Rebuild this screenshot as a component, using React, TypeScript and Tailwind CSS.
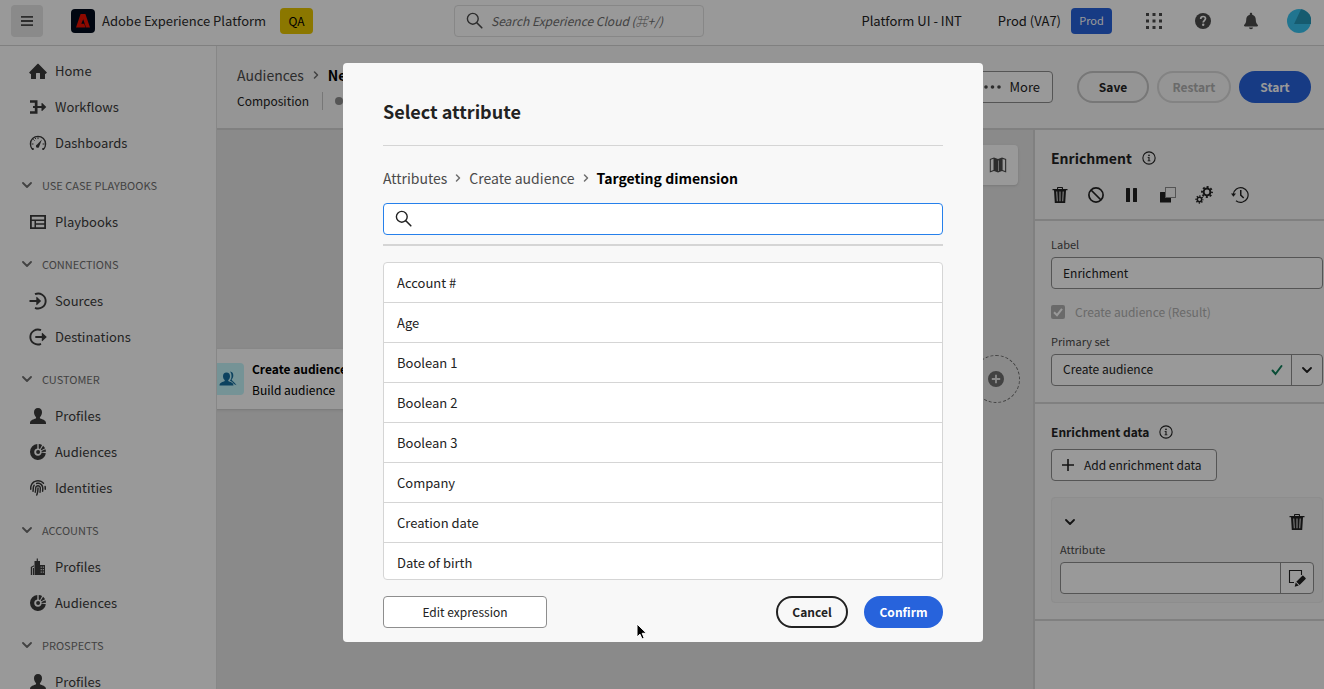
import type { ReactNode } from "react";
import { FaFingerprint } from "react-icons/fa6";

type IconProps = { className?: string; children?: ReactNode };

function Icon({ className = "size-[18px]", children }: IconProps) {
  return (
    <svg viewBox="0 0 18 18" className={`shrink-0 ${className}`} fill="currentColor" aria-hidden="true">
      {children}
    </svg>
  );
}

const HomeIcon = () => (
  <Icon>
    <path d="M17.666 10.125 9.375 1.834a.53.53 0 0 0-.75 0L.334 10.125a.53.53 0 0 0 0 .75l.979.9785A.5.5 0 0 0 1.6665 12H2v4.5a.5.5 0 0 0 .5.5h4a.5.5 0 0 0 .5-.5v-5a.5.5 0 0 1 .5-.5h3a.5.5 0 0 1 .5.5v5a.5.5 0 0 0 .5.5h4a.5.5 0 0 0 .5-.5V12h.3335a.5.5 0 0 0 .3535-.1465l.979-.9785a.53.53 0 0 0 0-.75Z" />
  </Icon>
);
const WorkflowIcon = () => (
  <Icon>
    <path d="M1 2.200h7.500V8h4V5.400a.4.4 0 0 1 .7-.3L17.300 9l-4.100 3.900a.4.4 0 0 1-.7-.3V10h-4v5.800H1v-2.500h4.800V10H4V8h1.800V4.700H1Z" />
  </Icon>
);
const DashboardIcon = () => (
  <Icon>
    <path d="M3.600 15.300A7.600 7.600 0 1 1 14.400 15.300" fill="none" stroke="currentColor" strokeWidth="1.300" />
    <path d="M12.900 5.400 10.300 12.200a1.700 1.700 0 1 1-2.200-1.700Z" />
    <path d="M2.500 10h2M4.300 5.300l1.300 1.300M9 3.200v1.900M15.600 10h-2M6.200 3.900l.6 1.200" fill="none" stroke="currentColor" strokeWidth="1" />
    <path d="M2.300 14h2.400v2H3.200ZM15.700 14h-2.400v2h1.500Z" />
  </Icon>
);
const PlaybookIcon = () => (
  <Icon>
    <path d="M1 2h16v14H1ZM2.800 3.800v2.700h12.400V3.800ZM2.800 8v6.300h2.700V8ZM7 8v2.300h8.200V8ZM7 11.800v2.500h8.200v-2.500Z" fillRule="evenodd" />
  </Icon>
);
const SourceIcon = () => (
  <Icon>
    <path d="M6 2.200A7.500 7.500 0 1 1 6 15.800" fill="none" stroke="currentColor" strokeWidth="1.900" />
    <path d="M.5 8h6.800V5.300a.4.4 0 0 1 .7-.3l4.100 4-4.100 4a.4.4 0 0 1-.7-.3V10H.5Z" />
  </Icon>
);
const DestinationIcon = () => (
  <Icon>
    <path d="M12 2.200A7.500 7.500 0 1 0 12 15.800" fill="none" stroke="currentColor" strokeWidth="1.900" />
    <path d="M6.300 8h6.500V5.300a.4.4 0 0 1 .7-.3l4.300 4-4.300 4a.4.4 0 0 1-.7-.3V10H6.300Z" />
  </Icon>
);
const PersonIcon = () => (
  <Icon>
    <path d="M9 1c2.600 0 4 1.900 4 4.300 0 1.800-.7 3.600-1.900 4.600-.3.300-.3 1.200.2 1.500 1.500.8 5.700 1.300 5.700 4.600v1H1v-1c0-3.300 4.200-3.800 5.700-4.600.5-.3.500-1.200.2-1.500C5.700 8.900 5 7.100 5 5.300 5 2.900 6.400 1 9 1Z" />
  </Icon>
);
const SegmentIcon = () => (
  <Icon>
    <path d="M8.300 1A8 8 0 1 0 16.900 10.200L12.600 9.600A3.700 3.700 0 1 1 8.300 5.400Z" />
    <path d="M9.700 1a8 8 0 0 1 3.400 1.100L11 6a4 4 0 0 0-1.300-.6ZM14.100 2.800a8 8 0 0 1 2 2.500L12.300 7.300l-.6-.8ZM16.500 6.300a8 8 0 0 1 .5 2.500l-4.300.1-.2-.8Z" />
    <circle cx="9.100" cy="9.100" r="2" />
  </Icon>
);
const BuildingIcon = () => (
  <Icon>
    <path d="M5.500 3h2.200V.5h1.200V3H11v4h5v10H5.500Z" />
    <path d="M11.700 8.500h1v1.200h-1ZM13.800 8.500h1v1.200h-1ZM11.700 11h1v1.200h-1ZM13.800 11h1v1.200h-1ZM11.700 13.500h1v1.200h-1ZM13.800 13.500h1v1.200h-1Z" fill="#fff" />
    <path d="M1.800 9 5 7.200v1.200L3 9.600V17H1.800ZM3.800 10H5v7H3.800Z" />
  </Icon>
);
const ChevronDown = () => (
  <svg viewBox="0 0 10 10" className="size-[10px] shrink-0" fill="none" stroke="currentColor" strokeWidth="1.800" strokeLinecap="round" strokeLinejoin="round" aria-hidden="true">
    <path d="M1 3 5 7 9 3" />
  </svg>
);
const ChevronRight = () => (
  <svg viewBox="0 0 10 10" className="size-[10px] shrink-0 text-[#6e6e6e]" fill="none" stroke="currentColor" strokeWidth="1.500" strokeLinecap="round" strokeLinejoin="round" aria-hidden="true">
    <path d="M3.500 2 6.500 5 3.500 8" />
  </svg>
);
const SearchIcon = () => (
  <Icon>
    <circle cx="6.800" cy="6.800" r="5.400" fill="none" stroke="currentColor" strokeWidth="1.400" />
    <path d="m10.800 10.800 5 5" fill="none" stroke="currentColor" strokeWidth="1.600" strokeLinecap="round" />
  </Icon>
);
const TrashIcon = () => (
  <Icon>
    <path d="M6 3V1.800C6 1.300 6.400 1 6.800 1h4.400c.5 0 .8.300.8.800V3h4.500v1.200H15L14.200 17H3.800L3 4.200H1.500V3Zm1.100 0h3.800v-.9H7.100ZM5.300 5.500l.5 9.700h.9l-.5-9.700Zm3.200 0v9.700h1V5.500Zm3.200 0-.4 9.700h.9l.5-9.700Z" fillRule="evenodd" />
  </Icon>
);
const BlockIcon = () => (
  <Icon>
    <circle cx="9" cy="9" r="7.100" fill="none" stroke="currentColor" strokeWidth="1.700" />
    <path d="m4 4 10 10" stroke="currentColor" strokeWidth="1.700" />
  </Icon>
);
const PauseIcon = () => (
  <Icon>
    <rect x="3" y="2" width="4" height="14" rx=".5" />
    <rect x="10" y="2" width="4" height="14" rx=".5" />
  </Icon>
);
const CopyIcon = () => (
  <Icon>
    <path d="M1.500 6H6v6h6v4.500H1.500a.5.500 0 0 1-.5-.5V6.500A.5.500 0 0 1 1.500 6Z" />
    <rect x="6.500" y="1.500" width="10" height="10" fill="none" stroke="currentColor" strokeDasharray="1 1" />
  </Icon>
);
const GearsIcon = () => (
  <Icon>
    <circle cx="12" cy="6" r="3.400" fill="none" stroke="currentColor" strokeWidth="2" />
    <circle cx="12" cy="6" r="5" fill="none" stroke="currentColor" strokeWidth="1.900" strokeDasharray="2 1.927" strokeDashoffset="1" />
    <circle cx="4.500" cy="13.500" r="2.200" fill="none" stroke="currentColor" strokeWidth="1.500" />
    <circle cx="4.500" cy="13.500" r="3.400" fill="none" stroke="currentColor" strokeWidth="1.500" strokeDasharray="1.300 1.370" strokeDashoffset=".65" />
  </Icon>
);
const HistoryIcon = () => (
  <Icon>
    <path d="M2.300 8.500A7.400 7.400 0 1 1 5 14.700" fill="none" stroke="currentColor" strokeWidth="1.200" />
    <path d="M0 7.500h5L2.400 10.700Z" />
    <path d="M9 4h1.500v4.800l2.700 2.600-1 1.100L9 9.400Z" />
  </Icon>
);
const InfoIcon = () => (
  <Icon className="size-[14px]">
    <circle cx="9" cy="9" r="7.900" fill="none" stroke="currentColor" strokeWidth="1.400" />
    <circle cx="9" cy="5.500" r="1.100" />
    <path d="M7.200 7.800h2.500v4.400h1.100v1H7.200v-1h1.100V8.800H7.200Z" />
  </Icon>
);
const MapIcon = () => (
  <Icon>
    <path d="M.8 3 5 1.500 9 3l4-1.500L17.200 3v13.500L13 15l-4 1.500L5 15 .8 16.500Zm1 .7v11.400l2.700-1V2.700ZM13.600 2.900v11.200l2.500.9V3.800ZM9 4.500v10.500h.6V4.500Z" fillRule="evenodd" />
  </Icon>
);
const AudienceIcon = () => (
  <Icon>
    <path d="M7.500 2.500c2.300 0 3.500 1.600 3.500 3.700 0 1.500-.6 3-1.600 3.900-.3.300-.2 1 .2 1.200 1.300.7 4.900 1.100 4.900 4.200H.5c0-3.100 3.600-3.500 4.900-4.200.4-.2.500-.9.200-1.200C4.600 9.200 4 7.700 4 6.200c0-2.100 1.200-3.700 3.500-3.700Z" />
    <path d="M11 1.500c2.500.3 3.300 2 3.300 4 0 1.600-.7 3-1.700 4 1 2.200 3.300 2.800 5 5.700L14.900 14c-.8-1.600-2.500-2.600-4-3.300 1-1.200 1.600-2.700 1.600-4.500 0-2-.5-3.500-1.500-4.700Z" />
  </Icon>
);
const EditIcon = () => (
  <Icon>
    <path d="M13.500 6V1.500h-12v12H6" fill="none" stroke="currentColor" strokeWidth="1.100" />
    <path d="m15.300 6.700 2.300 2.300c.3.300.3.700 0 1l-6 6-3.300-3.300 6-6c.3-.3.700-.3 1 0ZM7.700 13.500l3.100 3-4.100 1.300Z" />
  </Icon>
);

type NavEntry = { label: string; icon: () => ReactNode };
const nav: { title?: string; items: NavEntry[] }[] = [
  {
    items: [
      { label: "Home", icon: HomeIcon },
      { label: "Workflows", icon: WorkflowIcon },
      { label: "Dashboards", icon: DashboardIcon },
    ],
  },
  { title: "USE CASE PLAYBOOKS", items: [{ label: "Playbooks", icon: PlaybookIcon }] },
  {
    title: "CONNECTIONS",
    items: [
      { label: "Sources", icon: SourceIcon },
      { label: "Destinations", icon: DestinationIcon },
    ],
  },
  {
    title: "CUSTOMER",
    items: [
      { label: "Profiles", icon: PersonIcon },
      { label: "Audiences", icon: SegmentIcon },
      { label: "Identities", icon: () => <FaFingerprint className="size-[18px] shrink-0 p-px" /> },
    ],
  },
  {
    title: "ACCOUNTS",
    items: [
      { label: "Profiles", icon: BuildingIcon },
      { label: "Audiences", icon: SegmentIcon },
    ],
  },
  { title: "PROSPECTS", items: [{ label: "Profiles", icon: PersonIcon }] },
];

const attributes = ["Account #", "Age", "Boolean 1", "Boolean 2", "Boolean 3", "Company", "Creation date", "Date of birth"];

function TopBar() {
  return (
    <header className="flex h-[46px] shrink-0 items-center border-b border-[#d5d5d5] bg-white pb-1 pl-[11px] pr-[13px]">
      <button aria-label="Menu" className="flex size-8 shrink-0 items-center justify-center rounded bg-[#e6e6e6] text-[#4b4b4b]">
        <svg viewBox="0 0 12 10" className="h-[10px] w-3" fill="currentColor" aria-hidden="true">
          <path d="M0 0h12v1.800H0ZM0 4.100h12v1.800H0ZM0 8.200h12V10H0Z" />
        </svg>
      </button>
      <div className="ml-7 flex w-[209px] shrink-0 items-center gap-[7px]">
        <svg viewBox="0 0 24 24" className="size-6 shrink-0" aria-hidden="true">
          <rect width="24" height="24" rx="4" fill="#000b1d" />
          <path d="M9.600 5h4.800L19 18.500h-4L12.200 10.200 10.300 14.700h2.900l1.300 3.800H5Z" fill="#eb1000" />
        </svg>
        <span className="whitespace-nowrap text-[13px] text-[#2c2c2c]">Adobe Experience Platform</span>
      </div>
      <span className="flex h-[26px] w-[33px] shrink-0 items-center justify-center rounded bg-[#e8c600] text-xs text-black">QA</span>
      <label className="ml-[141px] flex h-8 w-[250px] items-center gap-[7px] rounded border border-[#e1e1e1] px-[11px] text-[#4b4b4b]">
        <SearchIcon />
        <input
          aria-label="Search Experience Cloud"
          placeholder="Search Experience Cloud (⌘+/)"
          className="w-full min-w-0 bg-transparent text-xs italic outline-none placeholder:text-[#6e6e6e]"
        />
      </label>
      <div className="ml-auto flex items-center whitespace-nowrap text-[13px] text-[#222]">
        <span>Platform UI - INT</span>
        <span className="ml-9">Prod (VA7)</span>
        <span className="ml-[10px] flex h-[26px] w-[41px] items-center justify-center rounded bg-[#2763dc] text-[11px] text-white">Prod</span>
        <button aria-label="Apps" className="ml-[34px] text-[#4b4b4b]">
          <svg viewBox="0 0 16 16" className="size-4" fill="currentColor" aria-hidden="true">
            <path d="M0 0h3v3H0ZM6.500 0h3v3h-3ZM13 0h3v3h-3ZM0 6.500h3v3H0ZM6.500 6.500h3v3h-3ZM13 6.500h3v3h-3ZM0 13h3v3H0ZM6.500 13h3v3h-3ZM13 13h3v3h-3Z" />
          </svg>
        </button>
        <button aria-label="Help" className="ml-8 text-[#4b4b4b]">
          <Icon>
            <circle cx="9" cy="9" r="8" />
            <path d="M6.700 6.900C6.700 5.300 7.700 4.500 9.100 4.500s2.400.8 2.400 2.100c0 1.900-2.300 2-2.300 3.900" fill="none" stroke="#fff" strokeWidth="1.700" />
            <circle cx="9.200" cy="12.800" r="1.200" fill="#fff" />
          </Icon>
        </button>
        <button aria-label="Notifications" className="ml-[30px] text-[#4b4b4b]">
          <Icon>
            <path d="M9 .8c.7 0 1.200.5 1.200 1.200v.8C12.600 3.400 13.800 5.300 13.800 8c0 3.700 2.200 4.600 2.200 5.600 0 .6-.5.900-1 .9H3c-.5 0-1-.3-1-.9C2 12.600 4.200 11.700 4.200 8c0-2.700 1.200-4.600 3.600-5.200V2C7.800 1.300 8.300.8 9 .8ZM6.900 15.500h4.200A2.100 2.100 0 0 1 9 17.300a2.100 2.100 0 0 1-2.100-1.800Z" />
          </Icon>
        </button>
        <button aria-label="Account" className="ml-[27px]">
          <svg viewBox="0 0 24 24" className="size-6" aria-hidden="true">
            <circle cx="12" cy="12" r="12" fill="#38c4f0" />
            <path d="M14 .2A12 12 0 0 1 24 15H7Z" fill="#2698ba" />
          </svg>
        </button>
      </div>
    </header>
  );
}

function SideNav() {
  return (
    <nav className="w-[217px] shrink-0 overflow-hidden border-r border-[#e1e1e1] bg-white">
      {nav.map((group, i) => (
        <section key={i} className="mt-[7px]">
          {group.title && (
            <button className="flex h-9 items-center gap-[10px] pb-0.5 pl-[22px] text-[11px] text-[#6e6e6e]">
              <ChevronDown />
              {group.title}
            </button>
          )}
          {group.items.map(({ label, icon: ItemIcon }) => (
            <a key={label} href="#" className="flex h-9 items-center gap-2 pl-[29px] text-[13px] text-[#3b3b3b]">
              <ItemIcon />
              {label}
            </a>
          ))}
        </section>
      ))}
    </nav>
  );
}

function PageHeader() {
  return (
    <div className="flex h-[84px] shrink-0 items-center justify-between border-b-2 border-[#d5d5d5] bg-[#f8f8f8] pl-5 pr-[13px]">
      <div className="whitespace-nowrap">
        <div className="flex h-7 items-center gap-[7px] text-sm text-[#4b4b4b]">
          <a href="#">Audiences</a>
          <ChevronRight />
          <strong className="text-black">New composition</strong>
        </div>
        <div className="flex h-6 items-center text-xs text-[#222]">
          Composition
          <span className="ml-[13px] h-[18px] w-px bg-[#c6c6c6]" />
          <span className="ml-3 mr-2 size-2 rounded-full bg-[#8e8e8e]" />
          Draft
        </div>
      </div>
      <div className="flex items-center text-xs">
        <button className="flex h-8 w-[85px] items-center justify-end gap-2 rounded border border-[#8e8e8e] bg-white pr-3 text-[13px] text-[#222]">
          <svg viewBox="0 0 17 4" className="h-1 w-[17px]" fill="#4b4b4b" aria-hidden="true">
            <circle cx="2" cy="2" r="1.800" />
            <circle cx="8.500" cy="2" r="1.800" />
            <circle cx="15" cy="2" r="1.800" />
          </svg>
          More
        </button>
        <button className="ml-6 h-8 w-[72px] rounded-full border-2 border-[#c6c6c6] font-bold text-[#222]">Save</button>
        <button disabled className="ml-2 h-8 w-[74px] rounded-full border-2 border-[#dadada] font-bold text-[#b1b1b1]">Restart</button>
        <button className="ml-2 h-8 w-[72px] rounded-full bg-[#2763dc] font-bold text-white">Start</button>
      </div>
    </div>
  );
}

function Canvas() {
  return (
    <div className="relative min-w-0 flex-1 overflow-hidden bg-[#e6e6e6]">
      <div className="absolute left-[-15px] top-[219px] flex h-[60px] w-60 items-center gap-2 bg-white px-[10px] shadow">
        <span className="flex size-8 items-center justify-center rounded bg-[#c4f5fb] text-[#156f9f]">
          <AudienceIcon />
        </span>
        <div className="text-xs leading-[21px] text-black">
          <div className="font-bold">Create audience</div>
          <div>Build audience</div>
        </div>
      </div>
      <button aria-label="Add activity" className="absolute right-[13px] top-[225px] flex size-12 items-center justify-center rounded-full border border-dashed border-[#6e6e6e] text-[#6e6e6e]">
        <Icon>
          <path d="M9 1a8 8 0 1 0 0 16A8 8 0 0 0 9 1Zm-.9 3.800h1.800v3.300h3.300v1.800H9.900v3.300H8.100V9.900H4.800V8.100h3.300Z" fillRule="evenodd" />
        </Icon>
      </button>
      <button aria-label="Show map" className="absolute right-[15px] top-[15px] flex size-10 items-center justify-center rounded bg-white text-[#4b4b4b] shadow">
        <MapIcon />
      </button>
    </div>
  );
}

function PropertiesPanel() {
  const tools: [string, () => ReactNode][] = [
    ["Delete", TrashIcon],
    ["Disable", BlockIcon],
    ["Pause", PauseIcon],
    ["Copy", CopyIcon],
    ["Options", GearsIcon],
    ["History", HistoryIcon],
  ];
  return (
    <aside className="w-[291px] shrink-0 overflow-hidden border-l-2 border-[#d5d5d5] bg-[#f8f8f8] text-xs text-[#222]">
      <div className="h-[91px] border-b-2 border-[#d5d5d5] pl-4 pt-4">
        <h2 className="flex h-6 items-center gap-[10px] text-sm font-bold">
          Enrichment
          <InfoIcon />
        </h2>
        <div className="mt-4 flex gap-[18px]">
          {tools.map(([name, ToolIcon]) => (
            <button key={name} aria-label={name}>
              <ToolIcon />
            </button>
          ))}
        </div>
      </div>
      <div className="border-b-2 border-[#d5d5d5] pb-4 pl-4 pr-px pt-4">
        <label htmlFor="activity-label" className="block h-5 text-[11px] leading-[14px] text-[#4b4b4b]">Label</label>
        <input id="activity-label" defaultValue="Enrichment" className="h-8 w-full rounded border border-[#8e8e8e] bg-white px-[11px] pb-0.5 outline-none" />
        <label className="mt-[13px] flex h-5 items-center gap-[10px] text-[#b1b1b1]">
          <span className="relative flex">
            <input type="checkbox" defaultChecked disabled className="size-[14px] appearance-none rounded-[2px] bg-[#b1b1b1]" />
            <svg viewBox="0 0 14 14" className="pointer-events-none absolute inset-0 size-[14px]" fill="none" stroke="#fff" strokeWidth="2" aria-hidden="true">
              <path d="m3 7.200 3 3L11 3.800" />
            </svg>
          </span>
          Create audience (Result)
        </label>
        <label htmlFor="primary-set" className="mt-3 block h-5 text-[11px] leading-[14px] text-[#4b4b4b]">Primary set</label>
        <div className="flex h-8 items-center rounded border border-[#8e8e8e] bg-white">
          <input id="primary-set" defaultValue="Create audience" className="min-w-0 flex-1 bg-transparent pb-0.5 pl-[11px] outline-none" />
          <svg viewBox="0 0 12 12" className="mr-2 size-3" fill="none" stroke="#12805c" strokeWidth="2" strokeLinecap="round" aria-hidden="true">
            <path d="m1.500 6.500 3 3.500 6-8" />
          </svg>
          <button aria-label="Show sets" className="flex h-full w-[31px] items-center justify-center border-l border-[#8e8e8e]">
            <ChevronDown />
          </button>
        </div>
      </div>
      <div className="border-b-2 border-[#d5d5d5] pb-4 pl-4 pr-px pt-[18px]">
        <h3 className="flex h-5 items-center gap-[10px] font-bold">
          Enrichment data
          <InfoIcon />
        </h3>
        <button className="mt-[7px] flex h-8 w-[166px] items-center gap-[10px] whitespace-nowrap rounded border border-[#8e8e8e] bg-white pl-[10px]">
          <svg viewBox="0 0 12 12" className="size-3" stroke="currentColor" strokeWidth="1.600" aria-hidden="true">
            <path d="M6 0v12M0 6h12" />
          </svg>
          Add enrichment data
        </button>
        <div className="mt-4 h-[106px] rounded border border-[#ebebeb] bg-[#f3f3f3] px-2 pt-[15px]">
          <div className="flex h-[18px] items-center justify-between px-[5px] pr-2">
            <button aria-label="Collapse">
              <ChevronDown />
            </button>
            <button aria-label="Remove attribute">
              <TrashIcon />
            </button>
          </div>
          <label htmlFor="attribute" className="mt-[11px] block h-5 text-[11px] leading-[14px] text-[#4b4b4b]">Attribute</label>
          <div className="flex h-8 items-center rounded border border-[#8e8e8e] bg-white">
            <input id="attribute" className="min-w-0 flex-1 bg-transparent pl-[11px] outline-none" />
            <button aria-label="Edit attribute" className="flex h-full w-[33px] items-center justify-center border-l border-[#8e8e8e]">
              <EditIcon />
            </button>
          </div>
        </div>
      </div>
    </aside>
  );
}

function AttributeDialog() {
  return (
    <div className="fixed inset-0 flex items-center justify-center bg-black/40 pl-0.5 pt-4">
      <div role="dialog" aria-labelledby="dialog-title" className="w-[640px] max-w-full rounded bg-[#f8f8f8] px-10 pb-[14px] pt-[33px] text-[13px] text-[#222]">
        <h1 id="dialog-title" className="text-lg font-bold leading-[30px]">Select attribute</h1>
        <hr className="mt-[19px] border-[#d5d5d5]" />
        <div className="mt-5 flex h-6 items-center gap-[6px] text-sm text-[#4b4b4b]">
          <a href="#">Attributes</a>
          <ChevronRight />
          <a href="#">Create audience</a>
          <ChevronRight />
          <strong className="text-black">Targeting dimension</strong>
        </div>
        <label className="mt-[13px] flex h-8 items-center gap-2 rounded border border-[#2680eb] bg-white px-[11px]">
          <SearchIcon />
          <input aria-label="Search attributes" className="min-w-0 flex-1 bg-transparent outline-none" />
        </label>
        <hr className="mt-[9px] border-t-2 border-[#d5d5d5]" />
        <ul className="mt-4 h-[318px] overflow-hidden rounded border border-[#d5d5d5] bg-white">
          {attributes.map((name) => (
            <li key={name} className="flex h-10 items-center border-b border-[#d5d5d5] px-[13px]">
              {name}
            </li>
          ))}
        </ul>
        <div className="mt-4 flex items-center gap-4 text-xs">
          <button className="mr-auto h-8 w-[164px] rounded border border-[#8e8e8e] bg-white">Edit expression</button>
          <button className="h-8 w-[72px] rounded-full border-2 border-[#222] font-bold">Cancel</button>
          <button className="h-8 w-[79px] rounded-full bg-[#2763dc] font-bold text-white">Confirm</button>
        </div>
      </div>
      <svg viewBox="0 0 12 18" className="absolute left-[636px] top-[623px] h-[18px] w-3" aria-hidden="true">
        <path d="M1 1v13l3-2.800 2 4.800 2.200-1L6.200 10.300h4.300Z" fill="#000" stroke="#fff" strokeWidth="1" />
      </svg>
    </div>
  );
}

export default function App() {
  return (
    <div className="flex h-screen flex-col overflow-hidden font-['Noto_Sans_CJK_SC',sans-serif]">
      <TopBar />
      <div className="flex min-h-0 flex-1">
        <SideNav />
        <main className="flex min-w-0 flex-1 flex-col">
          <PageHeader />
          <div className="flex min-h-0 flex-1">
            <Canvas />
            <PropertiesPanel />
          </div>
        </main>
      </div>
      <AttributeDialog />
    </div>
  );
}
